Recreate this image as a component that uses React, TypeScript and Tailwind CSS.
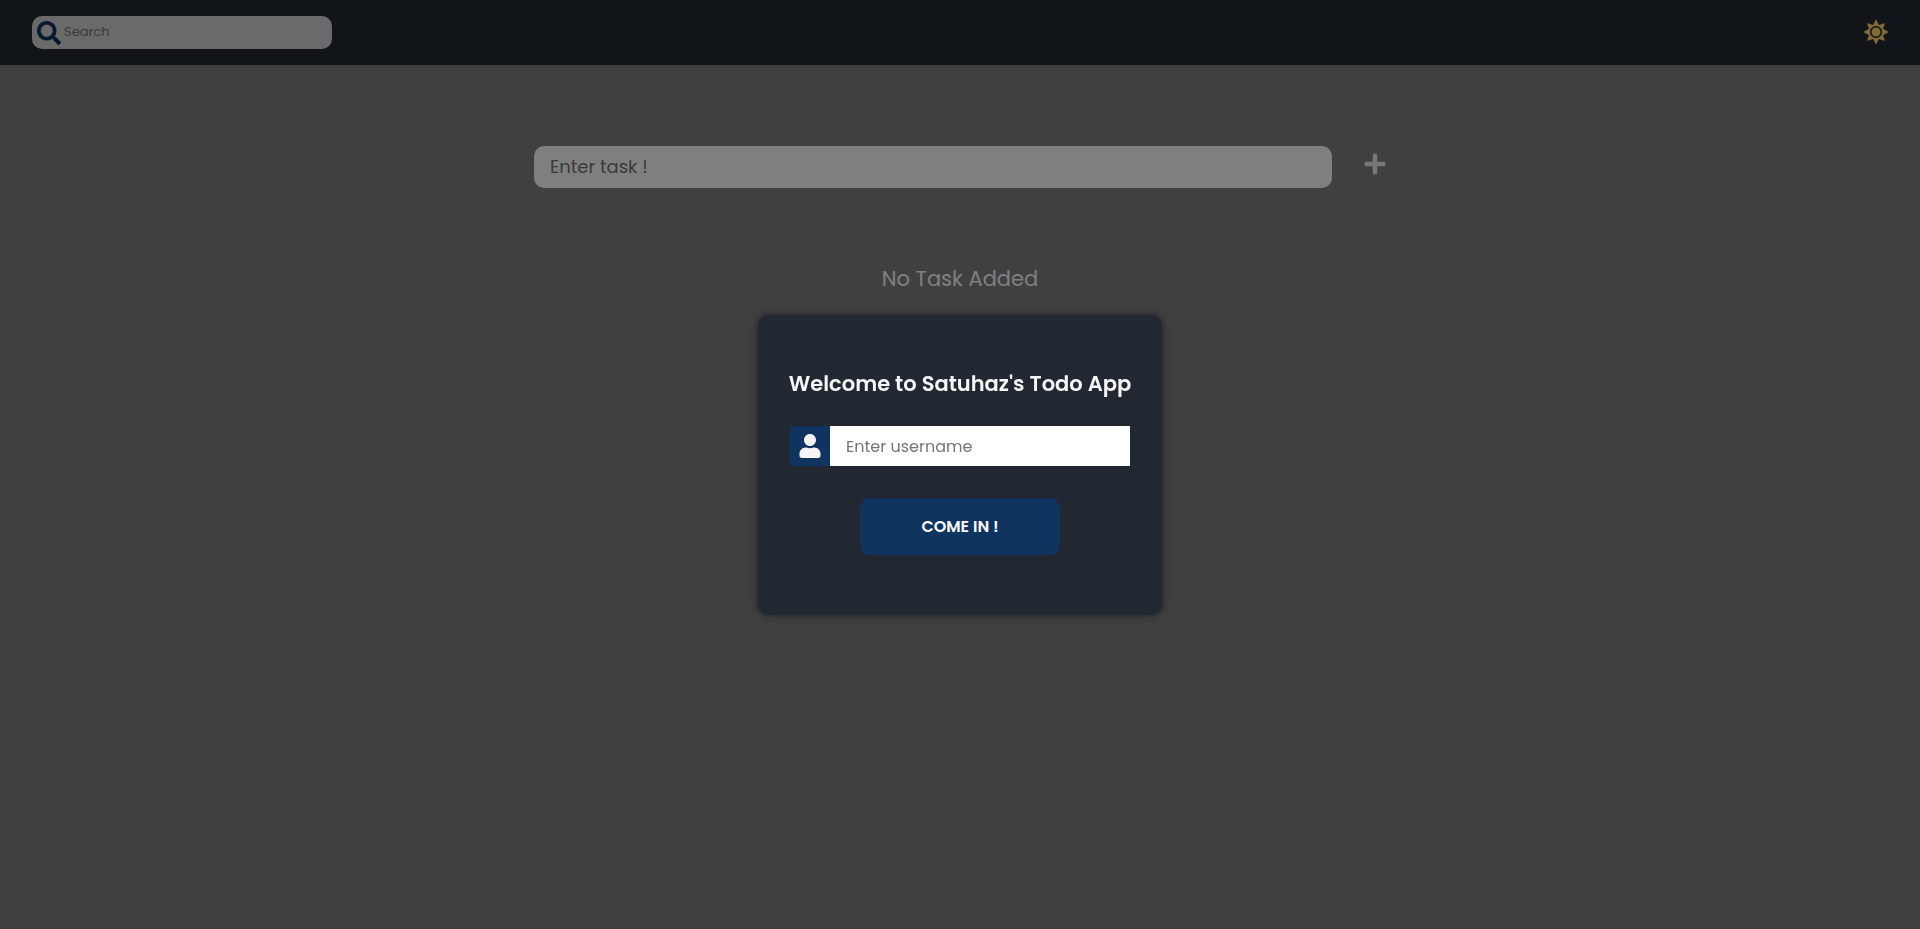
import { FaPlus, FaSearch, FaSun, FaUser } from "react-icons/fa";

function Header() {
  return (
    <header className="flex items-center justify-between bg-[#222831] px-8 py-4">
      <label className="flex h-[33px] w-[300px] items-center gap-[3px] rounded-[10px] bg-[#d4d4d4] pl-[5px]">
        <FaSearch className="size-6 shrink-0 text-[#0f3460]" />
        <input
          type="search"
          aria-label="Search"
          placeholder="Search"
          className="min-w-0 flex-1 bg-transparent pb-0.5 text-[13px] outline-none placeholder:text-[#757575]"
        />
      </label>
      <button type="button" aria-label="Toggle theme" className="pb-0.5 text-[#ffd369]">
        <FaSun className="size-6" />
      </button>
    </header>
  );
}

function WelcomeDialog() {
  return (
    <div className="fixed inset-0 flex items-center justify-center bg-black/50">
      <form
        role="dialog"
        aria-labelledby="welcome"
        className="flex w-[404px] flex-col items-center rounded-[10px] bg-[#222831] px-8 pt-[52px] pb-[60px] shadow-[0_0_10px_rgba(0,0,0,0.5)]"
      >
        <h1 id="welcome" className="text-[21px] leading-[34px] font-semibold whitespace-nowrap text-[#f5f5f5]">
          Welcome to Satuhaz's Todo App
        </h1>
        <label className="mt-[25px] flex h-10 w-full">
          <span className="flex w-10 items-center justify-center bg-[#0f3460] text-[#f5f5f5]">
            <FaUser className="size-6" />
          </span>
          <input
            type="text"
            aria-label="Username"
            placeholder="Enter username"
            className="min-w-0 flex-1 bg-white px-4 pt-0.5 text-base outline-none placeholder:text-[#757575]"
          />
        </label>
        <button
          type="button"
          className="mt-8 h-[57px] w-[200px] rounded-[10px] bg-[#0f3460] pt-0.5 text-base font-semibold text-white"
        >
          COME IN !
        </button>
      </form>
    </div>
  );
}

export default function App() {
  return (
    <div className="min-h-screen bg-[#808080] font-['Poppins','Inter',sans-serif]">
      <Header />
      <main className="flex flex-col items-center px-8 pt-[81px]">
        <form className="flex w-full max-w-[852px] items-start gap-8">
          <input
            type="text"
            aria-label="Task"
            placeholder="Enter task !"
            className="h-[42px] min-w-0 flex-1 rounded-[10px] bg-white px-4 pb-0.5 text-lg outline-none placeholder:text-[#757575]"
          />
          <button type="button" aria-label="Add task" className="pt-1.5 text-[#eeeeee]">
            <FaPlus className="h-6 w-[22px]" />
          </button>
        </form>
        <p className="mt-[74px] text-[21px] leading-[34px] text-white">No Task Added</p>
      </main>
      <WelcomeDialog />
    </div>
  );
}
